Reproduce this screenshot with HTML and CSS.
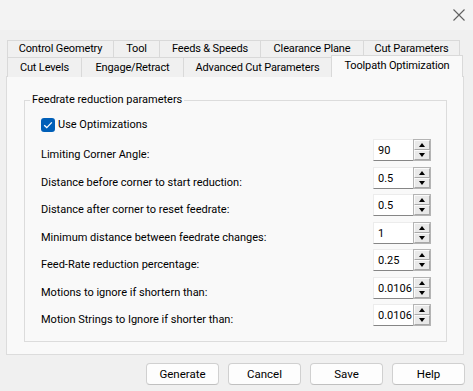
FILE: index.html
```html
<!DOCTYPE html>
<html>
<head>
<meta charset="utf-8">
<link rel="stylesheet" href="styles.css">
</head>
<body>
<div class="window">
  <div class="titlebar">
    <svg class="close" width="12" height="12" viewBox="0 0 12 12"><path d="M0.5 0.5 L11.5 11.5 M11.5 0.5 L0.5 11.5" stroke="#606060" stroke-width="1.1" fill="none"/></svg>
  </div>
  <div class="tabs">
    <div class="tabrow back">
      <div class="tab">Control Geometry</div>
      <div class="tab">Tool</div>
      <div class="tab">Feeds &amp; Speeds</div>
      <div class="tab">Clearance Plane</div>
      <div class="tab">Cut Parameters</div>
    </div>
    <div class="tabrow front">
      <div class="tab">Cut Levels</div>
      <div class="tab">Engage/Retract</div>
      <div class="tab">Advanced Cut Parameters</div>
      <div class="tab active">Toolpath Optimization</div>
    </div>
  </div>
  <div class="panel">
    <fieldset class="group">
      <legend>Feedrate reduction parameters</legend>
      <label class="check">
        <span class="box"><svg width="10" height="8" viewBox="0 0 10 8"><path d="M1.2 4.2 L3.8 6.6 L8.8 1.4" stroke="#fff" stroke-width="1.3" fill="none"/></svg></span>
        <span>Use Optimizations</span>
      </label>
      <div class="params">
        <div class="param"><span class="lbl">Limiting Corner Angle:</span><div class="spin"><div class="field">90</div><div class="arrows"><span class="up"></span><span class="down"></span></div></div></div>
        <div class="param"><span class="lbl">Distance before corner to start reduction:</span><div class="spin"><div class="field">0.5</div><div class="arrows"><span class="up"></span><span class="down"></span></div></div></div>
        <div class="param"><span class="lbl">Distance after corner to reset feedrate:</span><div class="spin"><div class="field">0.5</div><div class="arrows"><span class="up"></span><span class="down"></span></div></div></div>
        <div class="param"><span class="lbl">Minimum distance between feedrate changes:</span><div class="spin"><div class="field">1</div><div class="arrows"><span class="up"></span><span class="down"></span></div></div></div>
        <div class="param"><span class="lbl">Feed-Rate reduction percentage:</span><div class="spin"><div class="field">0.25</div><div class="arrows"><span class="up"></span><span class="down"></span></div></div></div>
        <div class="param"><span class="lbl">Motions to ignore if shortern than:</span><div class="spin"><div class="field">0.0106</div><div class="arrows"><span class="up"></span><span class="down"></span></div></div></div>
        <div class="param"><span class="lbl">Motion Strings to Ignore if shorter than:</span><div class="spin"><div class="field">0.0106</div><div class="arrows"><span class="up"></span><span class="down"></span></div></div></div>
      </div>
    </fieldset>
  </div>
  <div class="footer">
    <button class="btn">Generate</button>
    <button class="btn">Cancel</button>
    <button class="btn">Save</button>
    <button class="btn">Help</button>
  </div>
</div>
</body>
</html>
```
FILE: styles.css
```css
html, body {
  margin: 0;
  padding: 0;
  background: #f0f0f0;
}
body {
  font-family: Roboto, "Noto Sans", sans-serif;
  font-size: 11px;
  color: #000;
}
.window {
  width: 473px;
  height: 391px;
  overflow: hidden;
  background: #f0f0f0;
}
.titlebar {
  height: 30px;
  background: #f3f3f3;
  display: flex;
  justify-content: flex-end;
  align-items: flex-start;
}
.close {
  margin-top: 9px;
  margin-right: 8px;
}
.tabs {
  padding-top: 10px;
  padding-left: 7px;
}
.tabrow {
  display: grid;
}
.back {
  grid-template-columns: 106px 46px 101px 103px 97px;
  height: 17px;
}
.front {
  grid-template-columns: 74px 102px 148px 132px;
  height: 19px;
}
.tab {
  border-top: 1px solid #d9d9d9;
  border-left: 1px solid #d9d9d9;
  background: #f0f0f0;
  display: flex;
  align-items: center;
  justify-content: center;
  line-height: 14px;
  white-space: nowrap;
  letter-spacing: -0.15px;
}
.tab:last-child {
  border-right: 1px solid #d9d9d9;
}
.back .tab {
  padding-bottom: 1px;
}
.tab.active {
  background: #f9f9f9;
  position: relative;
  z-index: 2;
  margin-top: -2px;
  height: 22px;
  border-right: 1px solid #d9d9d9;
  padding-bottom: 2px;
  box-sizing: border-box;
}
.panel {
  margin: 0 9px 0 6px;
  height: 279px;
  box-sizing: border-box;
  border: 1px solid #dcdcdc;
  background: #f9f9f9;
  padding: 15px 16px 0 17px;
}
.group {
  margin: 0;
  padding: 0 15px 0 16px;
  border: 1px solid #dcdcdc;
  height: 250px;
  box-sizing: border-box;
}
.group legend {
  margin-left: -11px;
  padding: 0 2px;
  line-height: 16px;
}
.check {
  display: flex;
  align-items: center;
  gap: 3px;
  margin-top: 9px;
  height: 15px;
}
.box {
  width: 14px;
  height: 14px;
  border-radius: 3px;
  background: #005fb8;
  display: flex;
  align-items: center;
  justify-content: center;
}
.params {
  margin-top: 7px;
  display: flex;
  flex-direction: column;
  gap: 5.5px;
}
.param {
  display: flex;
  justify-content: space-between;
  align-items: center;
  height: 22px;
}
.lbl {
  align-self: flex-end;
  line-height: 13px;
}
.spin {
  display: flex;
  height: 22px;
}
.field {
  width: 40px;
  box-sizing: border-box;
  background: #fff;
  border-top: 1px solid #ececec;
  border-left: 1px solid #ececec;
  border-bottom: 1px solid #868686;
  padding: 3px 0 0 4px;
  line-height: 16px;
  overflow: hidden;
  white-space: nowrap;
}
.arrows {
  width: 18px;
  display: flex;
  flex-direction: column;
  box-sizing: border-box;
  border: 1px solid #b4b4b4;
  background: #e9e9e9;
}
.arrows span {
  flex: 1;
  box-sizing: border-box;
  border: 1px solid #fafafa;
  border-bottom-color: #a8a8a8;
  border-right-color: #a8a8a8;
  display: flex;
  align-items: center;
  justify-content: center;
}
.arrows .up::before {
  content: "";
  border-left: 3.5px solid transparent;
  border-right: 3.5px solid transparent;
  border-bottom: 4px solid #000;
}
.arrows .down::before {
  content: "";
  border-left: 3.5px solid transparent;
  border-right: 3.5px solid transparent;
  border-top: 4px solid #000;
}
.footer {
  display: flex;
  justify-content: flex-end;
  gap: 9px;
  padding: 8px 8px 0 0;
}
.btn {
  width: 73px;
  height: 22px;
  font-family: inherit;
  font-size: 11.5px;
  color: #000;
  background: #fdfdfd;
  border: 1px solid #d0d0d0;
  border-bottom-color: #c0c0c0;
  border-radius: 4px;
  padding: 0;
}
```
